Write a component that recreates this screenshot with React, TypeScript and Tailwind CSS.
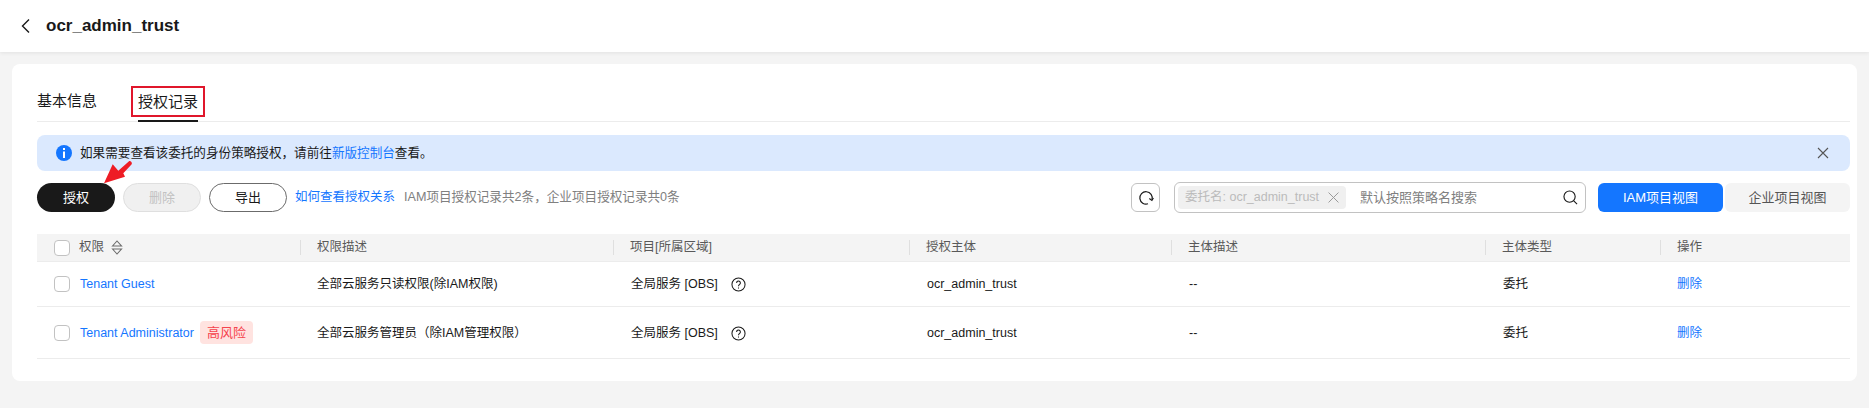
import React from 'react';

const FONT = "font-['Liberation_Sans','Noto_Sans_CJK_SC',sans-serif]";

const Checkbox = () => (
  <span className="block w-4 h-4 shrink-0 rounded-[4px] border border-[#c2c2c2] bg-white" />
);

const HelpIcon = () => (
  <svg width="15" height="15" viewBox="0 0 16 16" fill="none" stroke="#191919" strokeWidth="1.1">
    <circle cx="8" cy="8" r="7" />
    <path d="M6 6.3a2 2 0 1 1 3.2 1.6C8.4 8.5 8 8.9 8 9.8" />
    <path d="M8 11.2v1.1" />
  </svg>
);

const columns = 'grid grid-cols-[263px_313px_296px_262px_314px_175px_190px]';

const Row: React.FC<{ name: string; risk?: boolean; desc: string; height: string }> = ({ name, risk, desc, height }) => (
  <div className={`${columns} ${height} items-center border-b border-[#ececec] text-[12.5px] text-[#191919]`}>
    <div className="flex items-center pl-[17px]">
      <Checkbox />
      <a className="ml-[10px] pt-px text-[#1476ff]">{name}</a>
      {risk && <span className="ml-[6px] h-[23px] px-[7px] flex items-center rounded-[4px] bg-[#ffe3e0] text-[#f5424d] text-[13px]">高风险</span>}
    </div>
    <div className="pl-[17px] pt-px">{desc}</div>
    <div className="pl-[18px] pt-px flex items-center">
      全局服务 [OBS]
      <span className="ml-[13px]"><HelpIcon /></span>
    </div>
    <div className="pl-[18px] pt-px">ocr_admin_trust</div>
    <div className="pl-[18px] pt-px">--</div>
    <div className="pl-[18px] pt-px">委托</div>
    <div className="pl-[17px] pt-px"><a className="text-[#1476ff]">删除</a></div>
  </div>
);

export default function App() {
  return (
    <div className={`${FONT} w-[1869px] h-[408px] overflow-hidden bg-[#f4f4f4]`}>
      <div className="h-[52px] bg-white shadow-[0_1px_4px_rgba(0,0,0,0.08)] flex items-center pl-[20px]">
        <svg width="12" height="16" viewBox="0 0 12 16" fill="none" stroke="#191919" strokeWidth="1.4">
          <path d="M9 1.5 2.5 8 9 14.5" />
        </svg>
        <span className="ml-[14px] text-[17px] font-bold text-[#191919]">ocr_admin_trust</span>
      </div>

      <div className="mt-[12px] mx-[12px] h-[317px] rounded-[8px] bg-white pl-[25px] pr-[7px]">
        <div className="h-[58px] flex items-end border-b border-[#ececec] text-[15px] text-[#191919] whitespace-nowrap">
          <div className="h-[39px] w-[60px] leading-[24px] pt-[7px]">基本信息</div>
          <div className="relative ml-[41px] h-[39px] w-[60px] border-b-2 border-[#191919] pt-[7px] leading-[24px] -mb-px">
            授权记录
            <span className="absolute left-[-7px] right-[-7px] top-[3px] h-[31px] border-2 border-[#e0162b]" />
          </div>
        </div>

        <div className="mt-[13px] h-[36px] rounded-[8px] bg-[#dbe9fe] flex items-center pl-[19px] pr-[21px] text-[12.6px] text-[#191919]">
          <svg width="16" height="16" viewBox="0 0 16 16">
            <circle cx="8" cy="8" r="8" fill="#1476ff" />
            <rect x="7" y="3" width="2" height="2" fill="#fff" />
            <rect x="7" y="6.5" width="2" height="6.5" fill="#fff" />
          </svg>
          <span className="ml-[8px]">{'如果需要查看该委托的身份策略授权\uFF0C请前往'}<a className="text-[#1476ff]">新版控制台</a>查看。</span>
          <svg className="ml-auto" width="12" height="12" viewBox="0 0 12 12" fill="none" stroke="#555" strokeWidth="1.1">
            <path d="M1 1l10 10M11 1 1 11" />
          </svg>
        </div>

        <div className="mt-[12px] h-[29px] flex items-center text-[13px]">
          <div className="relative">
            <button className="w-[78px] h-[29px] rounded-full bg-[#191919] text-white">授权</button>
            <svg className="absolute left-[63px] top-[-25px]" width="34" height="28" viewBox="0 0 34 28">
              <path d="M12.7 6.3 18.3 12.7 29.3 3Q31 2.6 31.7 4.5T31 7L23.3 15.3 25 18.7 4 25.3Z" fill="#ee1c25" />
            </svg>
          </div>
          <button className="ml-[8px] w-[78px] h-[29px] rounded-full bg-[#f0f0f0] border border-[#dfdfdf] text-[#c2c2c2]">删除</button>
          <button className="ml-[8px] w-[78px] h-[29px] rounded-full bg-white border border-[#6b6b6b] text-[#191919]">导出</button>
          <a className="ml-[8px] text-[12.5px] text-[#1476ff]">如何查看授权关系</a>
          <span className="ml-[9px] text-[12.6px] text-[#808080]">{'IAM项目授权记录共2条\uFF0C企业项目授权记录共0条'}</span>

          <button className="ml-auto w-[29px] h-[29px] rounded-[6px] border border-[#c2c2c2] flex items-center justify-center">
            <svg width="16" height="16" viewBox="0 0 16 16" fill="none" stroke="#191919" strokeWidth="1.2">
              <path d="M10 13.8A6.2 6.2 0 1 1 14 9.6" />
              <path d="M11.3 8.6 13.9 10.4 15.4 8" />
            </svg>
          </button>
          <div className="ml-[14px] w-[412px] h-[31px] rounded-[6px] border border-[#c2c2c2] flex items-center pl-[3px] pr-[7px]">
            <span className="h-[23px] w-[168px] rounded-[4px] bg-[#f0f0f0] flex items-center pl-[7px] text-[12.5px] text-[#bbbbbb]">
              委托名: ocr_admin_trust
              <svg className="ml-auto mr-[7px]" width="11" height="11" viewBox="0 0 10 10" fill="none" stroke="#999" strokeWidth="0.9">
                <path d="M0.5 0.5l9 9M9.5 0.5l-9 9" />
              </svg>
            </span>
            <span className="ml-[14px] text-[#808080]">默认按照策略名搜索</span>
            <svg className="ml-auto" width="15" height="15" viewBox="0 0 16 16" fill="none" stroke="#191919" strokeWidth="1.2">
              <circle cx="7" cy="7" r="6" />
              <path d="M11.5 11.5 15 15" />
            </svg>
          </div>
          <button className="ml-[12px] w-[125px] h-[29px] rounded-[6px] bg-[#1476ff] text-white">IAM项目视图</button>
          <button className="ml-[2px] w-[125px] h-[29px] rounded-[6px] bg-[#f4f4f4] text-[#555555]">企业项目视图</button>
        </div>

        <div className="mt-[22px]">
          <div className={`${columns} h-[28px] bg-[#f4f4f4] border-b border-[#ececec] text-[12.5px] text-[#595959]`}>
            <div className="flex items-center pl-[17px]">
              <Checkbox />
              <span className="ml-[9px]">权限</span>
              <svg className="ml-[7px]" width="12" height="17" viewBox="0 0 12 17" fill="none" stroke="#6b6b6b" strokeWidth="1.1">
                <path d="M1.5 7 6 2l4.5 5zM1.5 10 6 15l4.5-5z" />
              </svg>
            </div>
            {['权限描述', '项目[所属区域]', '授权主体', '主体描述', '主体类型', '操作'].map(title => (
              <div key={title} className="relative flex items-center pl-[17px]">
                <span className="absolute left-0 top-[6px] bottom-[6px] w-px bg-[#dfdfdf]" />
                {title}
              </div>
            ))}
          </div>
          <Row name="Tenant Guest" desc="全部云服务只读权限(除IAM权限)" height="h-[45px]" />
          <Row name="Tenant Administrator" risk desc={'全部云服务管理员\uFF08除IAM管理权限\uFF09'} height="h-[52px]" />
        </div>
      </div>
    </div>
  );
}
